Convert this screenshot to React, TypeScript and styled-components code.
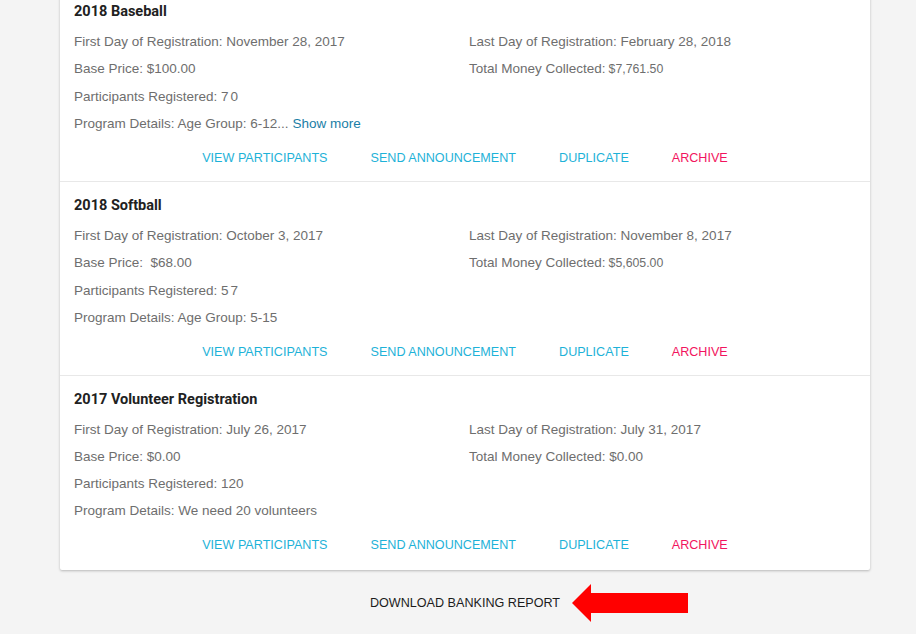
// 프로그램 목록 카드 + 은행 리포트 다운로드
import styled, { createGlobalStyle } from "styled-components";

const GlobalStyle = createGlobalStyle`
  html, body {
    margin: 0;
    padding: 0;
    background-color: #f4f4f4;
    overflow: hidden;
  }
  body {
    font-family: "Liberation Sans", Arial, sans-serif;
  }
`;

const Page = styled.div`
  width: 916px;
  height: 634px;
  box-sizing: border-box;
  padding-left: 14px;
  display: flex;
  flex-direction: column;
  align-items: center;
`;

const Card = styled.div`
  width: 810px;
  margin-top: -12px;
  background-color: #fff;
  border-radius: 2px;
  box-shadow: 0 1px 3px rgba(0, 0, 0, 0.18), 0 1px 2px rgba(0, 0, 0, 0.08);
`;

const Section = styled.div`
  padding: 15px 14px 14px 14px;
  border-top: 1px solid #e8e8e8;
  &:first-child {
    border-top: none;
  }
  &:last-child {
    padding-bottom: 16px;
  }
`;

const Title = styled.div`
  font-family: Roboto, "Liberation Sans", sans-serif;
  font-weight: 700;
  font-size: 14.5px;
  line-height: 18px;
  color: #212121;
  margin-bottom: 7px;
`;

const Info = styled.div`
  display: grid;
  grid-template-columns: 395px 1fr;
`;

const Field = styled.div<{ full?: boolean }>`
  grid-column: ${(props) => (props.full ? "1 / span 2" : "auto")};
  font-size: 13.5px;
  line-height: 27px;
  color: #6e6e6e;
  white-space: nowrap;
`;

const Small = styled.span`
  font-size: 12.3px;
  margin-left: 3px;
`;

const Spaced = styled.span`
  letter-spacing: 2px;
`;

const ShowMore = styled.a`
  color: #1a7ea6;
  text-decoration: none;
  cursor: pointer;
`;

const Actions = styled.div`
  display: flex;
  justify-content: center;
  gap: 43px;
  margin-top: 12px;
  height: 18px;
`;

const ActionBtn = styled.button<{ danger?: boolean }>`
  border: none;
  background: none;
  padding: 0;
  font-family: "Liberation Sans", Arial, sans-serif;
  font-size: 12.6px;
  line-height: 18px;
  text-transform: uppercase;
  color: ${(props) => (props.danger ? "#f2145e" : "#1eb2d8")};
  cursor: pointer;
`;

const Footer = styled.div`
  margin-top: 24px;
  display: flex;
  justify-content: center;
`;

const Download = styled.span`
  position: relative;
  font-size: 12.6px;
  line-height: 18px;
  color: #1c1c1c;
  text-transform: uppercase;
  cursor: pointer;
`;

const Arrow = styled.svg`
  position: absolute;
  left: calc(100% + 12px);
  top: -10px;
  width: 116px;
  height: 38px;
`;

type Program = {
  title: string;
  first: string;
  last: string;
  price: React.ReactNode;
  total: React.ReactNode;
  participants: React.ReactNode;
  details: React.ReactNode;
};

const programs: Program[] = [
  {
    title: "2018 Baseball",
    first: "November 28, 2017",
    last: "February 28, 2018",
    price: " $100.00",
    total: <Small>$7,761.50</Small>,
    participants: <Spaced>70</Spaced>,
    details: (
      <>
        Age Group: 6-12... <ShowMore>Show more</ShowMore>
      </>
    ),
  },
  {
    title: "2018 Softball",
    first: "October 3, 2017",
    last: "November 8, 2017",
    price: "\u00a0 $68.00",
    total: <Small>$5,605.00</Small>,
    participants: <Spaced>57</Spaced>,
    details: "Age Group: 5-15",
  },
  {
    title: "2017 Volunteer Registration",
    first: "July 26, 2017",
    last: "July 31, 2017",
    price: " $0.00",
    total: " $0.00",
    participants: "120",
    details: "We need 20 volunteers",
  },
];

function ProgramSection({ p }: { p: Program }) {
  return (
    <Section>
      <Title>{p.title}</Title>
      <Info>
        <Field>First Day of Registration: {p.first}</Field>
        <Field>Last Day of Registration: {p.last}</Field>
        <Field>Base Price:{p.price}</Field>
        <Field>Total Money Collected:{p.total}</Field>
        <Field full>Participants Registered: {p.participants}</Field>
        <Field full>Program Details: {p.details}</Field>
      </Info>
      <Actions>
        <ActionBtn>View Participants</ActionBtn>
        <ActionBtn>Send Announcement</ActionBtn>
        <ActionBtn>Duplicate</ActionBtn>
        <ActionBtn danger>Archive</ActionBtn>
      </Actions>
    </Section>
  );
}

export default function App() {
  return (
    <>
      <GlobalStyle />
      <Page>
        <Card>
          {programs.map((p) => (
            <ProgramSection key={p.title} p={p} />
          ))}
        </Card>
        <Footer>
          <Download>
            Download Banking Report
            <Arrow viewBox="0 0 116 38">
              <path d="M0 19 L19 0 L19 9 L116 9 L116 29 L19 29 L19 38 Z" fill="#ff0000" />
            </Arrow>
          </Download>
        </Footer>
      </Page>
    </>
  );
}
